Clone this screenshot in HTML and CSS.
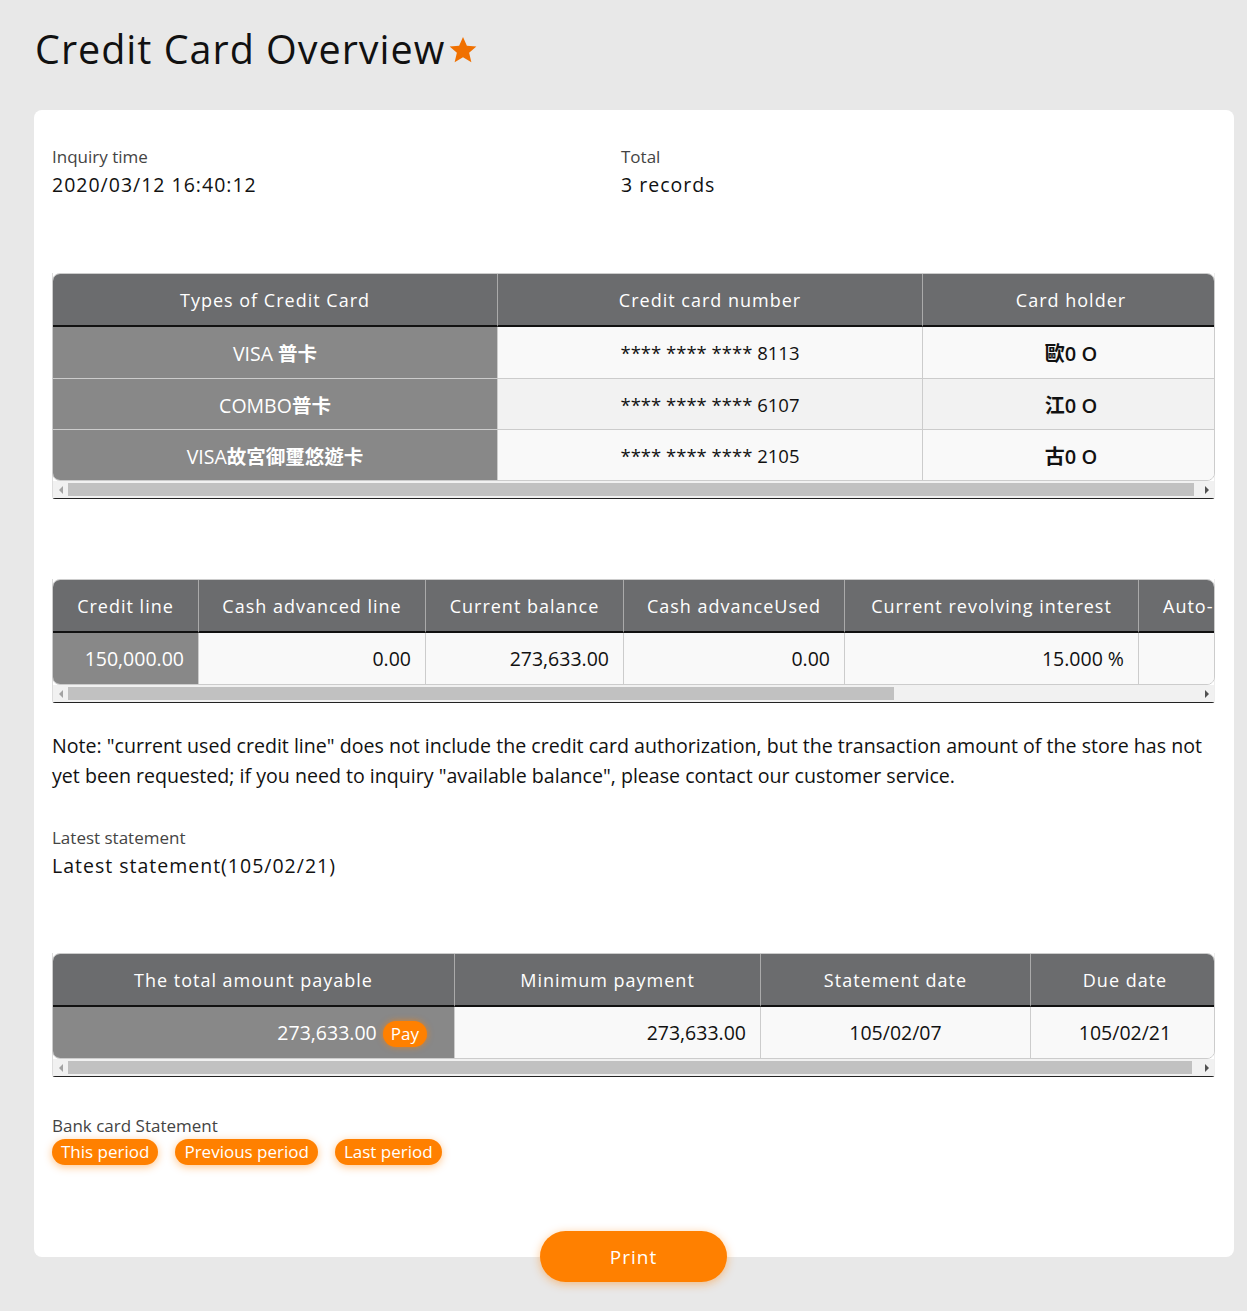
FILE: index.html
```html
<!DOCTYPE html>
<html lang="zh-Hant">
<head>
    <meta charset="UTF-8">
    <meta name="viewport" content="width=device-width, initial-scale=1.0">
    <title>Credit Card Overview</title>
    <link rel="stylesheet" href="styles.css">
</head>
<body>

<h1 class="page-title">Credit Card Overview
    <svg class="star" viewBox="0 0 24 24" width="30" height="30"><path d="M12 1.5l3.1 7.1 7.6.6-5.8 5 1.8 7.5L12 17.7l-6.7 4 1.8-7.5-5.8-5 7.6-.6z" fill="#f07000"/></svg>
</h1>

<div class="card">

    <!-- Datos de consulta -->
    <div class="info-grid">
        <div class="info">
            <div class="label">Inquiry time</div>
            <div class="value">2020/03/12 16:40:12</div>
        </div>
        <div class="info">
            <div class="label">Total</div>
            <div class="value">3 records</div>
        </div>
    </div>

    <!-- Tabla de tarjetas -->
    <div class="table-wrap wrap-cards">
        <div class="table-clip">
            <table class="data-table cards">
                <thead>
                    <tr>
                        <th class="c1">Types of Credit Card</th>
                        <th class="c2">Credit card number</th>
                        <th class="c3">Card holder</th>
                    </tr>
                </thead>
                <tbody>
                    <tr>
                        <td class="first center">VISA <b>普卡</b></td>
                        <td class="center num">**** **** **** 8113</td>
                        <td class="center holder">歐0 O</td>
                    </tr>
                    <tr>
                        <td class="first center">COMBO<b>普卡</b></td>
                        <td class="center num">**** **** **** 6107</td>
                        <td class="center holder">江0 O</td>
                    </tr>
                    <tr>
                        <td class="first center">VISA<b>故宮御璽悠遊卡</b></td>
                        <td class="center num">**** **** **** 2105</td>
                        <td class="center holder">古0 O</td>
                    </tr>
                </tbody>
            </table>
        </div>
        <div class="scrollbar">
            <span class="arrow arrow-left"></span>
            <div class="track"><div class="thumb" style="width: 99.6%"></div></div>
            <span class="arrow arrow-right"></span>
        </div>
    </div>

    <!-- Tabla de límites -->
    <div class="table-wrap wrap-lines">
        <div class="table-clip">
            <table class="data-table lines">
                <thead>
                    <tr>
                        <th class="l1">Credit line</th>
                        <th class="l2">Cash advanced line</th>
                        <th class="l3">Current balance</th>
                        <th class="l4">Cash advanceUsed</th>
                        <th class="l5">Current revolving interest</th>
                        <th class="l6">Auto-debit account</th>
                    </tr>
                </thead>
                <tbody>
                    <tr>
                        <td class="first right">150,000.00</td>
                        <td class="right">0.00</td>
                        <td class="right">273,633.00</td>
                        <td class="right">0.00</td>
                        <td class="right">15.000 %</td>
                        <td class="right"></td>
                    </tr>
                </tbody>
            </table>
        </div>
        <div class="scrollbar">
            <span class="arrow arrow-left"></span>
            <div class="track"><div class="thumb" style="width: 73%"></div></div>
            <span class="arrow arrow-right"></span>
        </div>
    </div>

    <p class="note">Note: "current used credit line" does not include the credit card authorization, but the transaction amount of the store has not yet been requested; if you need to inquiry "available balance", please contact our customer service.</p>

    <div class="info statement-info">
        <div class="label">Latest statement</div>
        <div class="value">Latest statement(105/02/21)</div>
    </div>

    <!-- Tabla de pagos -->
    <div class="table-wrap wrap-pay">
        <div class="table-clip">
            <table class="data-table pay">
                <thead>
                    <tr>
                        <th class="p1">The total amount payable</th>
                        <th class="p2">Minimum payment</th>
                        <th class="p3">Statement date</th>
                        <th class="p4">Due date</th>
                    </tr>
                </thead>
                <tbody>
                    <tr>
                        <td class="first right">273,633.00 <span class="badge">Pay</span></td>
                        <td class="right">273,633.00</td>
                        <td class="center">105/02/07</td>
                        <td class="center">105/02/21</td>
                    </tr>
                </tbody>
            </table>
        </div>
        <div class="scrollbar">
            <span class="arrow arrow-left"></span>
            <div class="track"><div class="thumb" style="width: 99.4%"></div></div>
            <span class="arrow arrow-right"></span>
        </div>
    </div>

    <div class="bank">
        <div class="label">Bank card Statement</div>
        <div class="pills">
            <span class="pill">This period</span>
            <span class="pill">Previous period</span>
            <span class="pill">Last period</span>
        </div>
    </div>

    <div class="print-row">
        <button class="print-btn">Print</button>
    </div>
</div>

</body>
</html>
```

FILE: styles.css
```css
body {
    font-family: "Open Sans", "Noto Sans CJK TC", sans-serif;
    margin: 0;
    padding: 0 13px 40px 34px;
    background-color: #e8e8e8;
    color: #111;
}
.page-title {
    margin: 0;
    padding: 25px 0 37px 1px;
    font-size: 39.5px;
    font-weight: 400;
    letter-spacing: 1px;
    line-height: 48px;
    display: flex;
    align-items: center;
}
.star {
    margin-left: 3px;
    margin-top: 2px;
}
.card {
    display: flow-root;
    background-color: white;
    border-radius: 8px;
    padding: 36px 19px 0 18px;
    margin-bottom: 30px;
}
.info-grid {
    display: grid;
    grid-template-columns: 569px 1fr;
}
.label {
    font-size: 17px;
    color: #444;
    line-height: 22px;
}
.value {
    font-size: 19.5px;
    letter-spacing: 1px;
    line-height: 28px;
    margin-top: 3px;
}

/* Tablas */
.table-wrap {
    border-left: 1px solid #ddd;
    border-right: 1px solid #eee;
    border-bottom: 1px solid #222;
    border-radius: 0 0 3px 3px;
}
.table-clip {
    border: 1px solid #ccc;
    border-radius: 8px;
    overflow: hidden;
    margin-left: -1px;
    margin-right: -1px;
}
.data-table {
    border-collapse: separate;
    border-spacing: 0;
    font-size: 19.5px;
}
.data-table th,
.data-table td {
    box-sizing: border-box;
}
.data-table th {
    background-color: #6b6c6e;
    color: white;
    font-weight: 400;
    font-size: 18px;
    letter-spacing: 1px;
    height: 53px;
    padding: 0 22px;
    border-bottom: 2px solid #111;
    border-left: 1px solid #aaa;
    white-space: nowrap;
    text-align: center;
}
.data-table th:first-child,
.data-table td:first-child {
    border-left: none;
}
.data-table td {
    height: 51px;
    padding: 0 14px;
    background-color: #f9f9f9;
    border-left: 1px solid #ccc;
    border-top: 1px solid #ccc;
    white-space: nowrap;
}
.data-table tbody tr:first-child td {
    border-top: none;
}
.data-table tbody tr:nth-child(2) td {
    background-color: #f2f2f2;
}
.data-table tbody tr td.first {
    background-color: #888;
    color: white;
}
.center {
    text-align: center;
}
.right {
    text-align: right;
}
.first b {
    font-weight: 700;
}
.num {
    font-size: 18.5px;
}
.holder {
    font-weight: 600;
    font-size: 20px;
}

/* Barra de desplazamiento */
.scrollbar {
    display: flex;
    height: 17px;
    background-color: #f1f1f1;
}
.arrow {
    width: 15px;
    display: flex;
    align-items: center;
    justify-content: center;
}
.arrow-left::before {
    content: "";
    border-top: 4px solid transparent;
    border-bottom: 4px solid transparent;
    border-right: 4px solid #a3a3a3;
}
.arrow-right::before {
    content: "";
    border-top: 4px solid transparent;
    border-bottom: 4px solid transparent;
    border-left: 4px solid #505050;
}
.track {
    flex: 1;
    padding-top: 2px;
}
.thumb {
    height: 13px;
    background-color: #c1c1c1;
}

.cards {
    width: 1166px;
}
.cards .c1 { width: 444px; }
.cards .c2 { width: 425px; }

.wrap-cards {
    margin-top: 74px;
}
.wrap-lines {
    margin-top: 80px;
}
.lines {
    width: 1590px;
}
.lines .l1 { width: 145px; padding: 0; }
.lines .l2 { width: 227px; padding: 0; }
.lines .l3 { width: 198px; padding: 0; }
.lines .l4 { width: 221px; padding: 0; }
.lines .l5 { width: 294px; padding: 0; }
.lines .l6 { padding: 0 24px; text-align: left; }

.note {
    font-size: 19.6px;
    line-height: 30px;
    margin: 28px 0 0 0;
    color: #111;
}
.statement-info {
    margin-top: 36px;
}

.wrap-pay {
    margin-top: 73px;
}
.pay {
    width: 1166px;
}
.pay .p1 { width: 401px; }
.pay .p2 { width: 306px; }
.pay .p3 { width: 270px; }
.badge {
    display: inline-block;
    background-color: #ff8000;
    color: white;
    border-radius: 13px;
    padding: 0 8px;
    margin-left: 1px;
    margin-right: 13px;
    font-size: 17px;
    line-height: 26px;
    box-shadow: 0 0 6px rgba(255, 128, 0, 0.7);
}

.bank {
    margin-top: 38px;
}
.pills {
    display: flex;
    gap: 17px;
    margin-top: 2px;
}
.pill {
    background-color: #ff8000;
    color: white;
    border-radius: 13px;
    padding: 0 9px;
    font-size: 17px;
    line-height: 26px;
    box-shadow: 0 2px 8px rgba(255, 128, 0, 0.45);
}

.print-row {
    display: flex;
    justify-content: center;
    padding-top: 66px;
    margin-bottom: -25px;
}
.print-btn {
    width: 187px;
    height: 51px;
    border: none;
    border-radius: 26px;
    background-color: #ff8000;
    color: white;
    font-family: "Open Sans", sans-serif;
    font-size: 19px;
    letter-spacing: 1px;
    box-shadow: 0 2px 10px rgba(255, 128, 0, 0.45);
    cursor: pointer;
}
```
